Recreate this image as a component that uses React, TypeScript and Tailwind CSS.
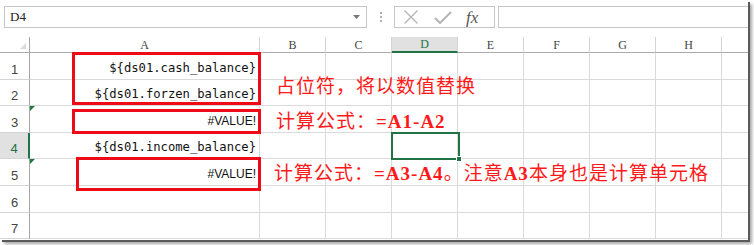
import React from 'react';

const cols = ['A', 'B', 'C', 'D', 'E', 'F', 'G', 'H', ''];
const rowHeights = ['h-[27px]', 'h-[26px]', 'h-[27px]', 'h-[26px]', 'h-[27px]', 'h-[27px]', 'h-[26px]'];

const cellA: Record<number, { text: string; mono: boolean }> = {
  1: { text: '${ds01.cash_balance}', mono: true },
  2: { text: '${ds01.forzen_balance}', mono: true },
  3: { text: '#VALUE!', mono: false },
  4: { text: '${ds01.income_balance}', mono: true },
  5: { text: '#VALUE!', mono: false },
};

const serif = 'font-["Liberation_Serif",serif]';
const note = 'absolute whitespace-nowrap text-[19px] leading-[19px] font-normal tracking-[1px] text-[#ff1a1a] font-["Liberation_Serif","Noto_Sans_CJK_SC",serif]';

export default function App() {
  return (
    <div className="w-[754px] h-[245px] bg-white overflow-hidden">
      <div className="relative w-[748px] h-[240px] bg-white shadow-[2px_2px_0_#5a5a5a,4px_4px_3px_rgba(0,0,0,0.35)]">
        {/* Formula bar */}
        <div className="flex items-start h-[37px] pt-[6px]">
          <div className="ml-[4px] w-[363px] h-[22px] border border-[#c6c6c6] flex items-center justify-between pl-[5px] pr-[6px]">
            <span className={`${serif} text-[13px] text-[#222]`}>D4</span>
            <svg width="7" height="4" viewBox="0 0 7 4"><path d="M0 0h7L3.5 4z" fill="#777" /></svg>
          </div>
          <div className="w-[27px] h-[22px] flex flex-col items-center justify-center gap-[2px]">
            <span className="w-[2px] h-[2px] bg-[#b0b0b0]" />
            <span className="w-[2px] h-[2px] bg-[#b0b0b0]" />
            <span className="w-[2px] h-[2px] bg-[#b0b0b0]" />
          </div>
          <div className="w-[101px] h-[22px] border border-[#c6c6c6] flex items-center">
            <svg className="ml-[8px]" width="16" height="14" viewBox="0 0 16 14">
              <path d="M1.5 0.5L14.5 13.5M14.5 0.5L1.5 13.5" stroke="#b4b4b4" strokeWidth="1.3" fill="none" />
            </svg>
            <svg className="ml-[15px]" width="18" height="13" viewBox="0 0 18 13">
              <path d="M1 7l5 5L17 1" stroke="#b4b4b4" strokeWidth="2" fill="none" />
            </svg>
            <span className={`ml-[14px] italic text-[17px] leading-none text-[#555] ${serif}`}>fx</span>
          </div>
          <div className="ml-[3px] flex-1 h-[22px] border border-[#c6c6c6] border-r-0" />
        </div>

        {/* Sheet grid */}
        <div className="grid grid-cols-[30px_230px_66px_66px_66px_66px_66px_66px_66px_26px]">
          <div className="relative h-[16px] border-r border-b border-r-[#a6a6a6] border-b-[#ababab]">
            <svg className="absolute right-[3px] bottom-[3px]" width="6" height="6" viewBox="0 0 6 6"><path d="M6 0v6H0z" fill="#dcdcdc" /></svg>
          </div>
          {cols.map((c, i) => (
            <div
              key={c + i}
              className={`h-[16px] flex items-end justify-center text-[12px] leading-[14px] ${serif} ${
                c === 'D'
                  ? 'bg-[#e1e1e1] text-[#217346] border-b-2 border-b-[#217346] border-r border-r-[#d4d4d4]'
                  : 'text-[#444] border-b border-b-[#ababab] border-r border-r-[#d4d4d4]'
              } ${i === cols.length - 1 ? 'border-r-0' : ''}`}
            >
              {c}
            </div>
          ))}
          {rowHeights.map((h, r) => (
            <React.Fragment key={r}>
              <div
                className={`${h} flex items-end justify-center pb-[2px] text-[13px] leading-[15px] font-["Liberation_Sans",sans-serif] border-b border-b-[#d4d4d4] ${
                  r === 3
                    ? 'bg-[#e1e1e1] text-[#217346] border-r-2 border-r-[#217346]'
                    : 'text-[#444] border-r border-r-[#a6a6a6]'
                }`}
              >
                {r + 1}
              </div>
              {cols.map((c, i) => {
                const v = i === 0 ? cellA[r + 1] : undefined;
                return (
                  <div
                    key={c + i}
                    className={`${h} relative flex items-end justify-end pr-[3px] pb-[4px] border-b border-[#dadada] ${
                      i === cols.length - 1 ? '' : 'border-r'
                    }`}
                  >
                    {i === 0 && (r === 2 || r === 4) && (
                      <svg className="absolute left-0 top-0" width="5" height="5" viewBox="0 0 5 5"><path d="M0 0h5L0 5z" fill="#1e7a3a" /></svg>
                    )}
                    {v && (
                      <span
                        className={
                          v.mono
                            ? 'text-[12.2px] leading-[14px] text-[#111] font-["DejaVu_Sans_Mono",monospace]'
                            : 'text-[12px] leading-[14px] text-[#111] font-["Liberation_Sans",sans-serif]'
                        }
                      >
                        {v.text}
                      </span>
                    )}
                  </div>
                );
              })}
            </React.Fragment>
          ))}
        </div>

        {/* Selection D4 */}
        <div className="absolute left-[391px] top-[132px] w-[69px] h-[28px] border-2 border-[#217346]" />
        <div className="absolute left-[456px] top-[156px] w-[6px] h-[6px] bg-[#217346] border border-white" />

        {/* Red annotation boxes */}
        <div className="absolute left-[72px] top-[52px] w-[189px] h-[53px] border-[3px] border-[#ee0a17]" />
        <div className="absolute left-[72px] top-[109px] w-[189px] h-[25px] border-[3px] border-[#ee0a17]" />
        <div className="absolute left-[76px] top-[157px] w-[185px] h-[34px] border-[3px] border-[#ee0a17]" />

        <div className={`${note} left-[276px] top-[77px]`}>占位符，将以数值替换</div>
        <div className={`${note} left-[276px] top-[112px]`}>
          计算公式：<b className="font-bold">=A1-A2</b>
        </div>
        <div className={`${note} left-[274px] top-[164px]`}>
          计算公式：<b className="font-bold">=A3-A4</b>。注意<b className="font-bold">A3</b>本身也是计算单元格
        </div>
      </div>
    </div>
  );
}
